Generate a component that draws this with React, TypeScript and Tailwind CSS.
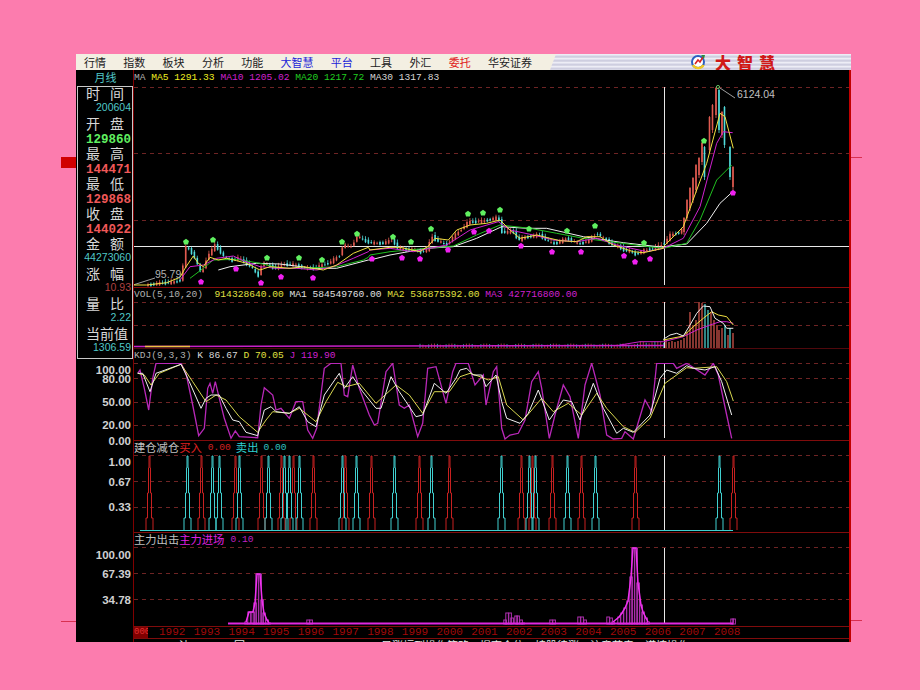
import React from 'react'

type P = [number, number]

// 由放大图读出的折线点，转换成页面坐标
const z = (ox: number, oy: number, a: number[]): P[] => {
  const r: P[] = []
  for (let i = 0; i < a.length; i += 2) r.push([ox + a[i] / 3, oy + a[i + 1] / 3])
  return r
}
const s = (p: P[]) => p.map(([x, y]) => `${x.toFixed(1)},${y.toFixed(1)}`).join(' ')

const penta = (cx: number, cy: number, r: number) => {
  const out: P[] = []
  for (let i = 0; i < 5; i++) {
    const a = -Math.PI / 2 + (i * 2 * Math.PI) / 5
    out.push([cx + r * Math.cos(a), cy + r * Math.sin(a)])
  }
  return s(out)
}

const ma5 = [
  ...z(70, 170, [190,345,230,345,290,338,330,322,345,295,370,258,385,280,400,290,420,262,445,270,470,265,500,272,530,280,570,300,600,290,660,295,700,290,760,300,800,285,850,250,895,232]),
  ...z(370, 170, [0,240,60,232,90,232,150,245,175,228,195,205,235,210,260,180,300,165,350,160,390,150,420,180,450,205,500,195,540,205,570,212,620,215,650,200,690,200,730,225,790,245,820,248,880,235]),
  ...z(620, 80, [130,500,190,440,230,330,260,250,300,100,315,110,340,205]),
]
const ma10 = [
  ...z(70, 170, [330,330,360,290,400,285,440,265,490,258,520,272,570,290,620,295,680,295,740,300,790,290,850,265,895,245]),
  ...z(370, 170, [0,240,60,235,130,245,180,235,230,225,300,180,385,155,420,180,490,195,550,210,620,215,680,205,740,225,830,245,880,235]),
  ...z(620, 80, [130,505,190,475,240,380,290,190,310,155,338,158]),
]
const ma20 = [
  ...z(70, 170, [360,325,400,295,430,270,500,268,570,280,630,295,700,295,800,290,880,270,895,262]),
  ...z(370, 170, [0,255,60,245,170,235,250,228,320,195,390,165,480,175,560,190,640,205,720,215,820,228,880,235]),
  ...z(620, 80, [130,505,200,490,240,420,290,300,320,270,335,255]),
]
const ma30 = [
  ...z(70, 170, [445,300,480,290,560,280,630,282,730,295,800,295,895,270]),
  ...z(370, 170, [0,270,60,255,170,235,250,230,320,205,395,170,470,175,530,175,640,200,760,218,880,232]),
  ...z(620, 80, [130,500,200,492,260,430,300,370,338,335]),
]

const closes: P[] = [[146,285],[160,283],[175,282],[182,279],[184,246],[190,250],[195,258],[200,272],[204,268],[207,255],[211,252],[214,244],[219,250],[225,258],[232,260],[238,258],[246,263],[252,268],[258,276],[262,262],[268,265],[275,268],[285,264],[295,265],[305,268],[315,268],[320,266],[330,262],[340,255],[343,244],[350,248],[357,236],[363,240],[372,243],[382,243],[393,240],[398,249],[405,250],[412,249],[420,252],[428,249],[431,235],[436,240],[446,245],[450,240],[458,232],[468,222],[483,221],[498,217],[502,232],[514,232],[518,240],[525,237],[540,235],[550,243],[556,243],[567,238],[578,244],[590,240],[597,233],[603,238],[615,246],[625,250],[635,254],[645,250],[655,248],[664,243],[670,235],[680,232],[684,226]]

const closeAt = (x: number) => {
  for (let i = 1; i < closes.length; i++) {
    if (x <= closes[i][0]) {
      const [x0, y0] = closes[i - 1]
      const [x1, y1] = closes[i]
      return y0 + ((y1 - y0) * (x - x0)) / (x1 - x0)
    }
  }
  return closes[closes.length - 1][1]
}

type Bar = { x: number; t: number; b: number; up: boolean; wt: number; wb: number }
const candles: Bar[] = []
for (let x = 148; x < 684; x += 2.9) {
  const wob = Math.sin(x * 1.7) * 1.2
  const y0 = closeAt(x - 2.9) + wob
  const y1 = closeAt(x) - wob
  const up = y1 <= y0
  candles.push({ x, t: Math.min(y0, y1), b: Math.max(y0, y1) + 0.6, up, wt: Math.min(y0, y1) - 1 - Math.abs(Math.sin(x)) * 2, wb: Math.max(y0, y1) + 1.5 })
}
const late: [number, number, number, boolean][] = [[684,218,232,true],[687,200,218,true],[690,188,208,true],[693,178,200,true],[696,165,190,true],[699,158,175,true],[702,143,162,true],[704.5,147,177,false],[709.5,117,150,true],[712.5,105,130,true],[716,88,115,true],[719,90,130,false],[722,112,135,true],[724.5,107,145,false],[730,147,177,false],[733,167,187,true]]
late.forEach(([x, t, b, up]) => candles.push({ x, t, b, up, wt: t - 1, wb: b + 3 }))

const greens: P[] = [[186,242],[213,240],[267,258],[299,258],[322,260],[342,242],[357,234],[393,237],[411,242],[431,229],[468,214],[483,213],[500,210],[529,229],[567,231],[595,226],[644,243],[704,141]]
const pinks: P[] = [[201,282],[236,269],[261,283],[281,277],[313,278],[372,259],[402,258],[420,259],[448,250],[474,232],[489,231],[521,246],[552,252],[581,252],[624,256],[635,262],[650,259],[733,193]]

const kdjJ = [
  ...z(76, 345, [185,85,192,75,205,130,218,195,230,100,240,55,315,55,330,85,350,180,368,272,385,250,395,130,402,115,410,145,418,110,430,160,445,220,465,280,478,258,490,275,545,278,555,180,565,128,590,150,600,195,615,190,640,220,660,170,680,170,695,255,710,280,722,250,745,70,765,55,795,55,805,150,815,155,830,60,850,130,880,210,895,240,905,235,930,80,950,55,970,180,985,190,1000,180,1025,275,1040,235,1055,70,1080,65,1110,175,1130,80,1140,55]),
  ...z(460, 345, [25,55,45,120,70,90,78,180,100,80,110,65,125,250,135,282,150,270,175,265,195,225,215,110,235,80,245,130,268,280,285,210,310,120,330,155,355,280,375,120,395,55,420,150,440,270,460,282,485,280,495,260,520,282,555,165,575,200,590,55,640,55,650,70,680,55,735,90,760,55,775,90,800,210,815,280]),
]
const kdjK = [
  ...z(76, 345, [185,85,200,85,222,140,240,85,315,58,340,110,375,190,390,160,405,150,430,150,450,190,470,225,490,230,510,262,545,272,565,195,585,185,600,200,640,205,670,185,695,230,720,245,745,150,790,85,805,130,830,95,860,140,900,190,915,190,945,95,970,140,990,170,1020,215,1040,210,1075,115,1110,145,1140,100]),
  ...z(460, 345, [0,75,20,70,40,90,65,90,78,125,108,90,125,170,140,220,180,235,205,205,235,135,268,225,310,165,335,170,360,225,400,115,430,190,470,265,490,250,520,262,570,210,600,100,620,75,650,85,680,62,700,70,735,75,765,65,785,110,815,210]),
]
const kdjD = [
  ...z(76, 345, [185,85,205,90,225,120,250,85,315,58,350,110,390,170,420,150,450,165,490,215,545,262,570,225,590,200,640,205,670,190,720,230,750,170,785,112,810,125,850,115,900,175,960,120,1000,150,1040,205,1075,140,1120,140]),
  ...z(460, 345, [0,95,30,85,60,95,85,105,115,95,140,180,190,225,245,160,280,200,325,175,365,210,410,145,440,190,490,245,525,262,570,220,615,115,680,68,700,70,770,65,800,110,820,168]),
]

const redSig = [...[220,375,478,555,615,650,712,808,885,1028,1118].map((p) => 76 + p / 3), ...[182,217,277,362,525,818].map((p) => 460 + p / 3)]
const cyanSig = [...[332,408,428,488,575,625,640,668,798,840,953,1065].map((p) => 76 + p / 3), ...[122,208,226,320,405,776].map((p) => 460 + p / 3)]
const pulse = (x: number) =>
  `M${x - 3.5} 530V518H${x - 2}V493H${x - 1}V468H${x - 0.5}V456H${x + 0.5}V468H${x + 1}V493H${x + 2}V518H${x + 3.5}V530`

const flow: P[] = [[246,622],[249,612],[253,612],[255,603],[257,574],[260,574],[262,600],[264,613],[267,620],[269,623],[308,620],[311,620],[505,620],[507,613],[510,613],[512,618],[516,616],[518,616],[521,620],[523,623],[551,620],[554,620],[579,617],[582,617],[585,620],[608,617],[611,618],[613,622],[619,617],[622,613],[625,608],[628,601],[631,577],[633,548],[636,548],[638,583],[641,605],[643,612],[646,618],[648,622],[732,619],[734,619]]

const volBars: [number, number, boolean][] = [[666,340,true],[669,342,true],[672,341,true],[675,342,true],[678,341,true],[681,340,true],[684,338,true],[687,332,true],[690,312,true],[693,325,true],[696,320,true],[699,302,true],[702,303,true],[705,304,false],[708,310,false],[711,312,true],[714,320,true],[717,325,true],[719,330,true],[722,328,true],[725,325,false],[728,335,true],[730,328,false],[733,333,true]]
const volSmall: number[] = []
for (let x = 420; x < 665; x += 2.9) volSmall.push(x)

const menus = [
  { t: '行情', c: 'text-[#222222]' },
  { t: '指数', c: 'text-[#222222]' },
  { t: '板块', c: 'text-[#222222]' },
  { t: '分析', c: 'text-[#222222]' },
  { t: '功能', c: 'text-[#222222]' },
  { t: '大智慧', c: 'text-[#1c1cd8]' },
  { t: '平台', c: 'text-[#1c1cd8]' },
  { t: '工具', c: 'text-[#222222]' },
  { t: '外汇', c: 'text-[#222222]' },
  { t: '委托', c: 'text-[#e02020]' },
  { t: '华安证券', c: 'text-[#222222]' },
]

const info = [
  { l: ['时', '间'], v: '200604', c: 'text-[#50c8c8]', big: false },
  { l: ['开', '盘'], v: '129860', c: 'text-[#60f060]', big: true },
  { l: ['最', '高'], v: '144471', c: 'text-[#f05858]', big: true },
  { l: ['最', '低'], v: '129868', c: 'text-[#f05858]', big: true },
  { l: ['收', '盘'], v: '144022', c: 'text-[#f05858]', big: true },
  { l: ['金', '额'], v: '44273060', c: 'text-[#50c8c8]', big: false },
  { l: ['涨', '幅'], v: '10.93', c: 'text-[#b04040]', big: false },
  { l: ['量', '比'], v: '2.22', c: 'text-[#50c8c8]', big: false },
  { l: ['当前值'], v: '1306.59', c: 'text-[#50c8c8]', big: false },
]

const years = ['1992','1993','1994','1995','1996','1997','1998','1999','2000','2001','2002','2003','2004','2005','2006','2007','2008']

const mono = "font-['Liberation_Mono',monospace]"
const cjk = "font-['Noto_Sans_CJK_SC',sans-serif]"
const axis = "font-['Liberation_Sans',sans-serif] font-bold text-[11.5px] leading-[10px] text-[#d0d0d0] text-right pr-[2px]"
const grid = '#6e2424'

function Grid({ ys }: { ys: number[] }) {
  return (
    <>
      {ys.map((y) => (
        <line key={y} x1={134} x2={849} y1={y + 0.5} y2={y + 0.5} stroke={grid} strokeDasharray="4 4" />
      ))}
    </>
  )
}

function MainChart() {
  return (
    <svg width={715} height={202} viewBox="134 85 715 202" className="block">
      <Grid ys={[87, 153, 220]} />
      <line x1={134} x2={849} y1={246.5} y2={246.5} stroke="#e8e8e8" />
      <line x1={664.5} x2={664.5} y1={87} y2={285} stroke="#e8e8e8" />
      {candles.map((c, i) => (
        <g key={i} stroke={c.up ? '#e05a50' : '#50dcdc'}>
          <line x1={c.x} x2={c.x} y1={c.wt} y2={c.wb} strokeWidth={0.8} />
          <line x1={c.x} x2={c.x} y1={c.t} y2={c.b} strokeWidth={1.6} />
        </g>
      ))}
      <polyline points="133,285 155,278" fill="none" stroke="#a0a0a0" />
      <polyline points={s(ma30)} fill="none" stroke="#f0f0f0" />
      <polyline points={s(ma20)} fill="none" stroke="#20c020" />
      <polyline points={s(ma10)} fill="none" stroke="#d020d0" />
      <polyline points={s(ma5)} fill="none" stroke="#f0e040" />
      {greens.map(([x, y]) => (
        <polygon key={x} points={penta(x, y, 3.2)} fill="#60f060" />
      ))}
      {pinks.map(([x, y]) => (
        <polygon key={x} points={penta(x, y, 3.2)} fill="#f020f0" />
      ))}
      <circle cx={718} cy={87} r={1.6} fill="none" stroke="#60c060" />
      <polyline points="720,88 735,98" fill="none" stroke="#a0a0a0" />
      <text x={737} y={98} fontSize={10.5} fill="#c0c0c0" fontFamily="Liberation Sans">6124.04</text>
      <text x={155} y={278} fontSize={10.5} fill="#b0b0b0" fontFamily="Liberation Sans">95.79</text>
    </svg>
  )
}

function VolChart() {
  return (
    <svg width={715} height={46} viewBox="134 302 715 46" className="block">
      <Grid ys={[302, 325]} />
      <line x1={664.5} x2={664.5} y1={302} y2={348} stroke="#e8e8e8" />
      {volSmall.map((x, i) => (
        <line key={x} x1={x} x2={x} y1={345.5 - Math.abs(Math.sin(x * 0.9)) * 2 - (x > 640 ? 2 : 0)} y2={348} stroke={i % 3 === 0 ? '#50dcdc' : '#e05a50'} strokeOpacity={0.7} />
      ))}
      {volBars.map(([x, t, up]) => (
        <line key={x} x1={x} x2={x} y1={t} y2={348} stroke={up ? '#e05a50' : '#50dcdc'} strokeWidth={1.2} />
      ))}
      <polyline points="134,346.5 664,345.5" fill="none" stroke="#c820c8" strokeWidth={1.5} />
      <polyline points="145,346.5 190,346.5" fill="none" stroke="#f0c040" strokeWidth={1.5} />
      <polyline points={s(z(620, 80, [0,795,60,785,130,785,190,770,230,750,270,735,300,725,320,725,340,730]))} fill="none" stroke="#d020d0" />
      <polyline points={s(z(620, 80, [130,780,190,768,220,740,250,715,275,695,295,705,320,710,340,735]))} fill="none" stroke="#f0e040" />
      <polyline points={s(z(620, 80, [130,778,150,765,170,760,190,768,210,735,230,700,250,678,270,680,285,715,310,730,320,745,340,745]))} fill="none" stroke="#f0f0f0" />
    </svg>
  )
}

function KdjChart() {
  return (
    <svg width={715} height={77} viewBox="134 363 715 77" className="block">
      <Grid ys={[363, 378, 402, 425]} />
      <line x1={664.5} x2={664.5} y1={363} y2={438} stroke="#e8e8e8" />
      <polyline points={s(kdjJ)} fill="none" stroke="#b828b8" strokeWidth={1.3} />
      <polyline points={s(kdjD)} fill="none" stroke="#d8d850" />
      <polyline points={s(kdjK)} fill="none" stroke="#f0f0f0" />
    </svg>
  )
}

function SignalChart() {
  return (
    <svg width={715} height={77} viewBox="134 455 715 77" className="block">
      <Grid ys={[455, 481, 507]} />
      <line x1={664.5} x2={664.5} y1={456} y2={530} stroke="#e8e8e8" />
      {redSig.map((x) => (
        <path key={x} d={pulse(Math.round(x) + 0.5)} fill="none" stroke="#c82020" />
      ))}
      <line x1={140} x2={733} y1={530.5} y2={530.5} stroke="#40d0d0" />
      {cyanSig.map((x) => (
        <path key={x} d={pulse(Math.round(x) + 0.5)} fill="none" stroke="#40d0d0" />
      ))}
    </svg>
  )
}

function FlowChart() {
  return (
    <svg width={715} height={79} viewBox="134 547 715 79" className="block">
      <Grid ys={[547, 573, 599]} />
      <line x1={664.5} x2={664.5} y1={548} y2={624} stroke="#e8e8e8" />
      {flow.map(([x, y]) => (
        <rect key={x} x={x - 1.2} y={y} width={2.6} height={624 - y} fill="none" stroke="#b030b0" />
      ))}
      <polyline points={s(flow.slice(0, 10))} fill="none" stroke="#f030f0" strokeWidth={1.5} />
      <polyline points={s(flow.slice(27, 40))} fill="none" stroke="#f030f0" strokeWidth={1.5} />
      <line x1={228} x2={733} y1={623.5} y2={623.5} stroke="#e028e0" strokeWidth={2} />
    </svg>
  )
}

function Logo() {
  return (
    <svg width={16} height={16} viewBox="0 0 16 16" className="block">
      <circle cx={8} cy={8} r={6} fill="#ffffff" stroke="#2a5fc0" strokeWidth={2} />
      <path d="M3 11a6 6 0 0 0 10.5 0" fill="none" stroke="#f0c820" strokeWidth={2.4} />
      <path d="M5 10L8 6l2 2 3-5" fill="none" stroke="#d82020" strokeWidth={1.6} />
      <path d="M11 1h4l-1 4z" fill="#2a8a40" />
    </svg>
  )
}

export default function App() {
  return (
    <div className="relative h-[690px] w-[920px] overflow-hidden bg-[#fc7cae] pl-[76px] pt-[54px]">
      <div className="absolute left-[61px] top-[157px] h-[11px] w-[15px] bg-[#d00000]" />
      <div className="absolute left-[61px] top-[621px] h-px w-[15px] bg-[#d83050]" />
      <div className="absolute left-[851px] top-[157px] h-px w-[11px] bg-[#d83050]" />
      <div className="absolute left-[851px] top-[620px] h-px w-[11px] bg-[#d83050]" />

      <div className="flex h-[588px] w-[775px] flex-col">
        {/* メニュー */}
        <div className="flex h-[16px] bg-[#f3efe2]">
          <div className={`flex w-[474px] items-center gap-[17.3px] pl-[8px] text-[11px] leading-none ${cjk}`}>
            {menus.map((m) => (
              <span key={m.t} className={m.c}>{m.t}</span>
            ))}
          </div>
          <div className="flex flex-1 items-center justify-center gap-[9px] bg-[repeating-linear-gradient(180deg,#f4f4fa_0px,#d8d8e8_2px,#c4c4d8_3px,#e8e8f2_4px)] pl-[70px] [clip-path:polygon(6px_0,100%_0,100%_100%,0_100%)]">
            <Logo />
            <span className={`text-[16px] font-black leading-none tracking-[6px] text-[#d01818] ${cjk}`}>大智慧</span>
          </div>
        </div>

        <div className="flex flex-1 bg-black">
          {/* left */}
          <div className="flex w-[57px] flex-col">
            <div className={`h-[16px] pl-[2px] text-center text-[11px] leading-[15px] text-[#50c8c8] ${cjk}`}>月线</div>
            <div className="ml-[1px] flex h-[273px] flex-col border border-[#c8c8c8]">
              {info.map((row) => (
                <div key={row.v} className="flex h-[30px] flex-col">
                  <div className={`flex h-[16px] justify-between whitespace-nowrap px-[8px] text-[14px] leading-[12px] text-[#d8d8d8] ${cjk}`}>
                    {row.l.map((c) => (
                      <span key={c}>{c}</span>
                    ))}
                  </div>
                  {row.big ? (
                    <div className={`h-[14px] pr-[1px] text-right ${mono} text-[12.5px] font-bold leading-[14px] ${row.c}`}>{row.v}</div>
                  ) : (
                    <div className={`h-[14px] pr-[1px] text-right font-['Liberation_Sans',sans-serif] text-[10.5px] leading-[8px] ${row.c}`}>{row.v}</div>
                  )}
                </div>
              ))}
            </div>
            <div className="flex flex-col pt-[6px]">
              <div className={`h-[9px] ${axis}`}>100.00</div>
              <div className={`h-[23px] ${axis}`}>80.00</div>
              <div className={`h-[23px] ${axis}`}>50.00</div>
              <div className={`h-[16px] ${axis}`}>20.00</div>
              <div className={`h-[21px] ${axis}`}>0.00</div>
              <div className={`h-[20px] ${axis}`}>1.00</div>
              <div className={`h-[25px] ${axis}`}>0.67</div>
              <div className={`h-[48px] ${axis}`}>0.33</div>
              <div className={`h-[19px] ${axis}`}>100.00</div>
              <div className={`h-[26px] ${axis}`}>67.39</div>
              <div className={`h-[12px] ${axis}`}>34.78</div>
            </div>
          </div>

          {/* panes */}
          <div className="flex w-[718px] flex-col border-l border-r-2 border-l-[#800000] border-r-[#c00000]">
            <div className="border-b border-b-[#8a0c0c]">
              <div className={`h-[15px] whitespace-pre ${mono} text-[9.6px] leading-[15px]`}>
                <span className="text-[#b0b0b0]">MA </span>
                <span className="text-[#f0f020]">MA5 1291.33 </span>
                <span className="text-[#d020d0]">MA10 1205.02 </span>
                <span className="text-[#20d020]">MA20 1217.72 </span>
                <span className="text-[#d8d8d8]">MA30 1317.83</span>
              </div>
              <MainChart />
            </div>
            <div className="border-b border-b-[#50080c]">
              <div className={`h-[14px] whitespace-pre ${mono} text-[9.6px] leading-[14px]`}>
                <span className="text-[#b0b0b0]">VOL(5,10,20)  </span>
                <span className="text-[#e0e040]">914328640.00 </span>
                <span className="text-[#e0e0e0]">MA1 584549760.00 </span>
                <span className="text-[#e0e040]">MA2 536875392.00 </span>
                <span className="text-[#d020d0]">MA3 427716800.00</span>
              </div>
              <VolChart />
            </div>
            <div className="border-b border-b-[#800c0c]">
              <div className={`h-[14px] whitespace-pre ${mono} text-[9.6px] leading-[14px]`}>
                <span className="text-[#b0b0b0]">KDJ(9,3,3) </span>
                <span className="text-[#d8d8d8]">K 86.67 </span>
                <span className="text-[#e0e040]">D 70.05 </span>
                <span className="text-[#d020d0]">J 119.90</span>
              </div>
              <KdjChart />
            </div>
            <div className="border-b border-b-[#800c0c]">
              <div className={`flex h-[14px] items-center whitespace-pre text-[11.3px] leading-none ${cjk}`}>
                <span className="text-[#c0c0c0]">建仓减仓</span>
                <span className="text-[#e02020]">买入</span>
                <span className={`ml-[6px] ${mono} text-[9.6px] text-[#d02020]`}>0.00</span>
                <span className="ml-[5px] text-[#30d0d0]">卖出</span>
                <span className={`ml-[5px] ${mono} text-[9.6px] text-[#30c0c0]`}>0.00</span>
              </div>
              <SignalChart />
            </div>
            <div className="border-b border-b-[#800c0c]">
              <div className={`flex h-[14px] items-center whitespace-pre text-[11.3px] leading-none ${cjk}`}>
                <span className="text-[#c0c0c0]">主力出击</span>
                <span className="text-[#e020e0]">主力进场</span>
                <span className={`ml-[6px] ${mono} text-[9.6px] text-[#c020c0]`}>0.10</span>
              </div>
              <FlowChart />
            </div>
            <div className={`flex h-[12px] border-b border-b-[#800c0c] ${mono} text-[11px] leading-[11px] text-[#a00808]`}>
              <span className="mr-[11px] h-[11px] w-[14px] overflow-hidden bg-[#800000] text-[9px] text-[#e03030]">000</span>
              {years.map((y) => (
                <span key={y} className="w-[34.7px] shrink-0">{y}</span>
              ))}
            </div>
            <div className={`flex h-[3px] overflow-hidden whitespace-pre pl-[45px] text-[11px] leading-[12px] text-[#e8e8e8] ${cjk}`}>
              <span className="w-[55px]">波</span>
              <span className="w-[147px]">回</span>
              <span>日涨幅到操作策略，提高仓位，持股待涨，注意节奏，谨慎操作</span>
            </div>
          </div>
        </div>
      </div>
    </div>
  )
}
